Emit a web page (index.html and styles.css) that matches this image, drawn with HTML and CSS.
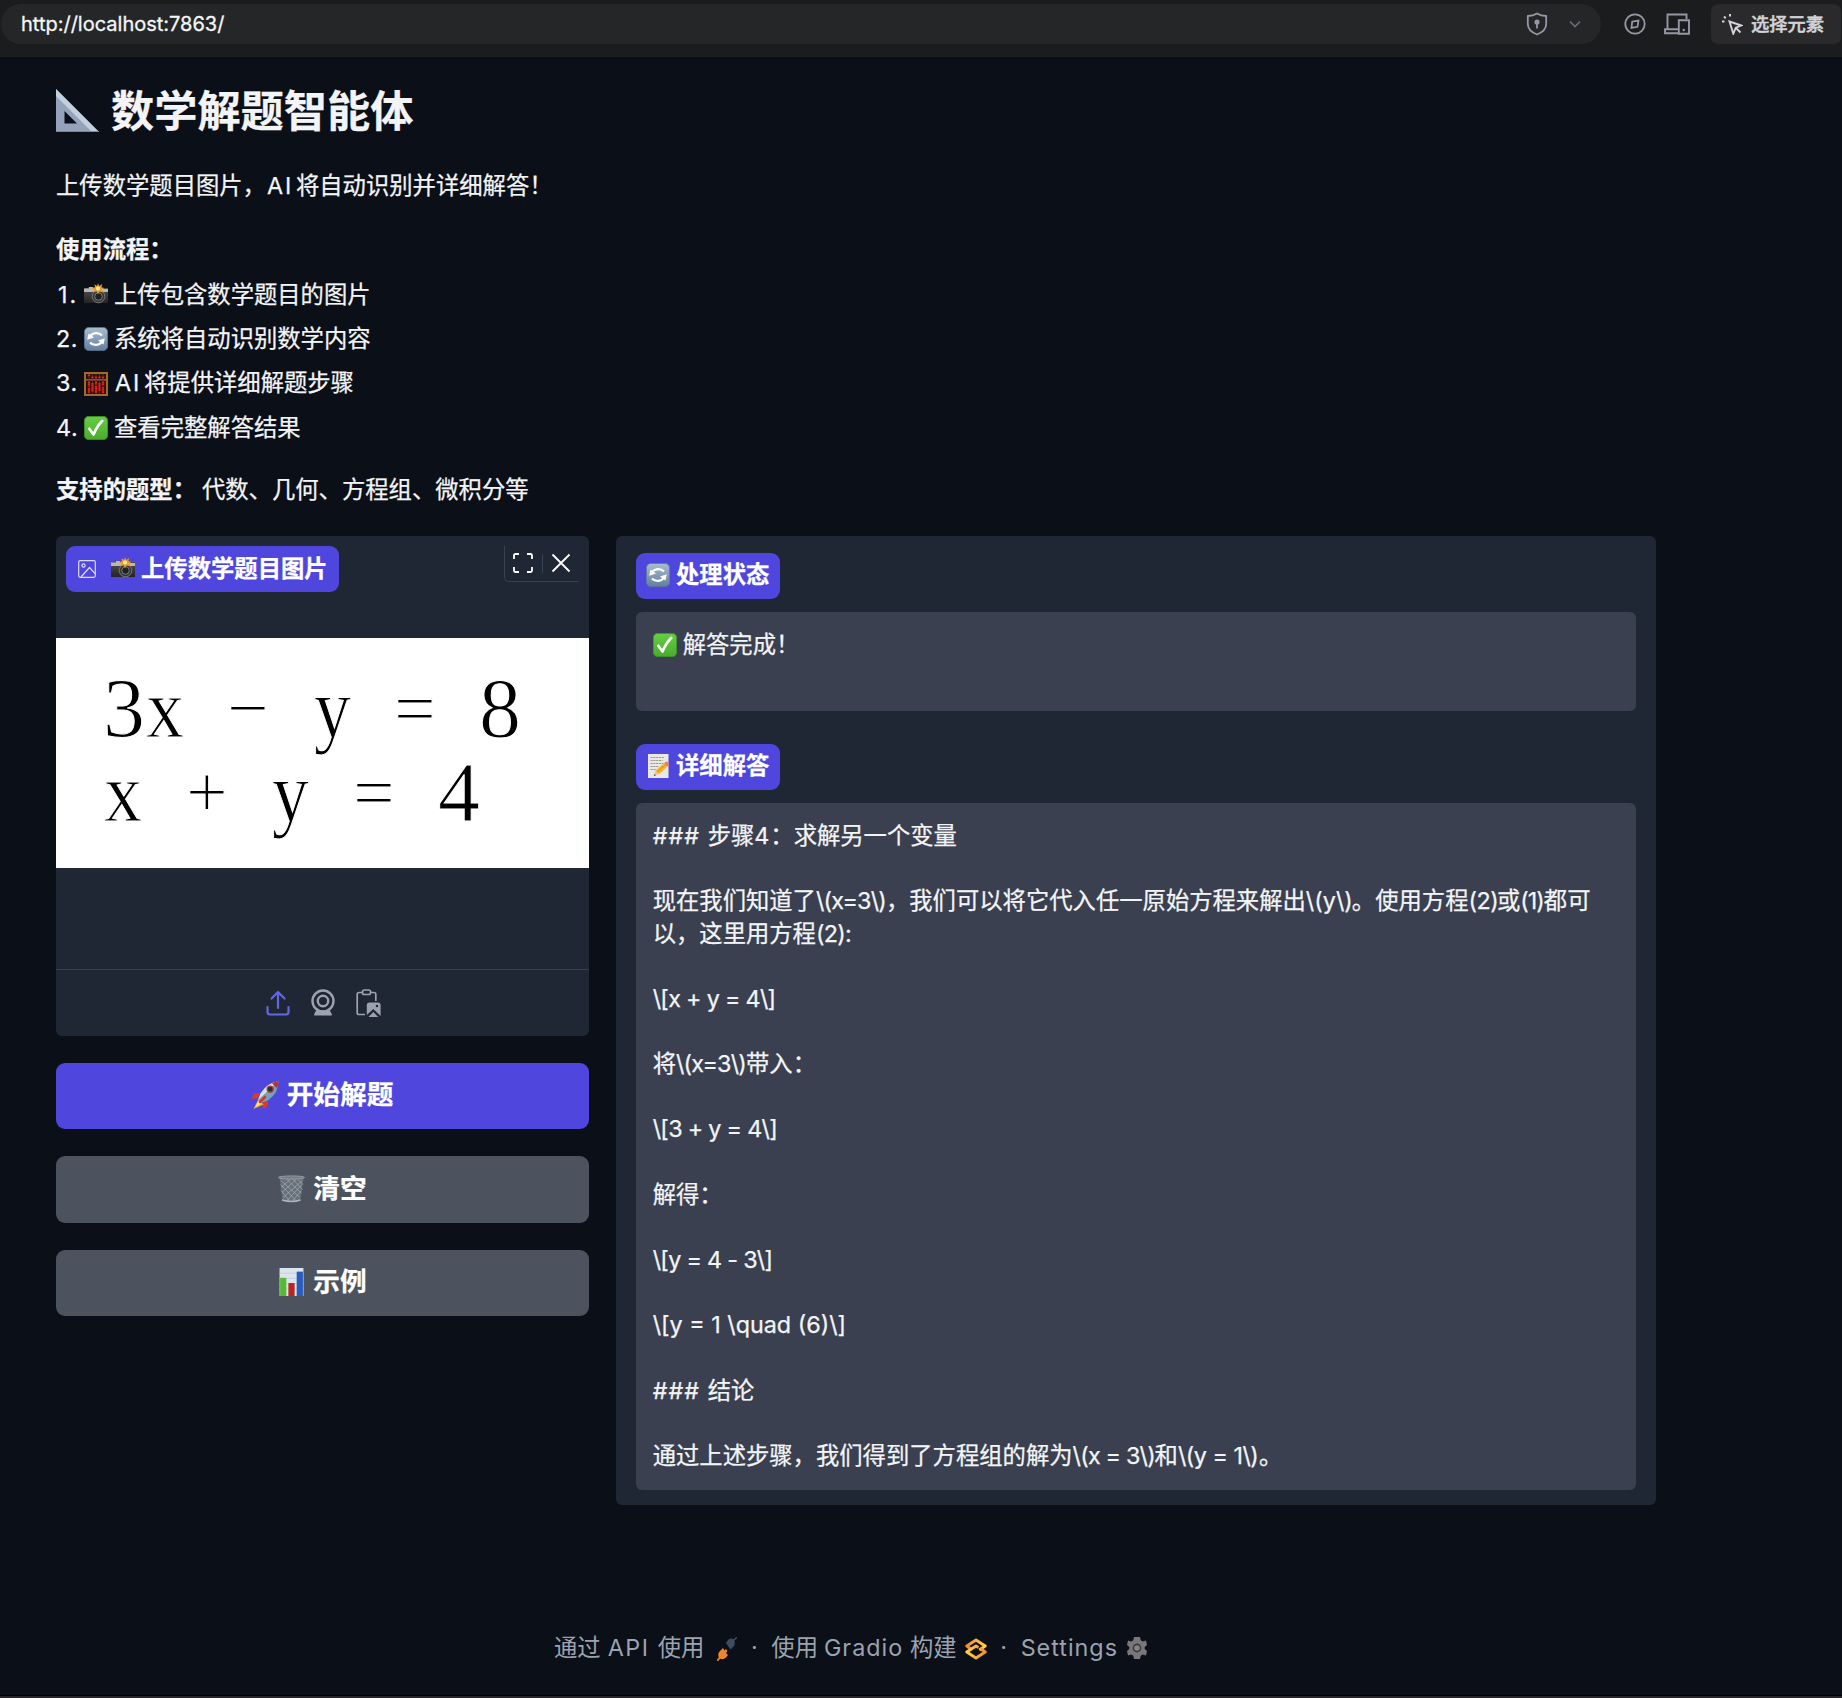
FILE: index.html
```html
<!DOCTYPE html>
<html lang="zh-CN">
<head>
<meta charset="utf-8">
<title>数学解题智能体</title>
<link rel="stylesheet" href="styles.css">
</head>
<body>
<svg class="sprite" aria-hidden="true">
  <defs>
    <linearGradient id="g-blue" x1="0" y1="0" x2="0" y2="1"><stop offset="0" stop-color="#a9bdd0"/><stop offset="1" stop-color="#627f9f"/></linearGradient>
    <linearGradient id="g-green" x1="0" y1="0" x2="0" y2="1"><stop offset="0" stop-color="#65cf43"/><stop offset="1" stop-color="#4aab2c"/></linearGradient>
    <linearGradient id="g-body" x1="0" y1="0" x2="0" y2="1"><stop offset="0" stop-color="#55534f"/><stop offset="1" stop-color="#242424"/></linearGradient>
    <linearGradient id="g-logo" x1="0" y1="0" x2="1" y2="0"><stop offset="0" stop-color="#f58b32"/><stop offset="1" stop-color="#ffd044"/></linearGradient>
    <linearGradient id="g-logo2" x1="0" y1="0" x2="1" y2="0"><stop offset="0" stop-color="#ffd044"/><stop offset="1" stop-color="#f58b32"/></linearGradient>
  </defs>
  <symbol id="camera" viewBox="0 0 24 24">
    <path d="M0 7q0-2 2-2h2l1-1h4l1 1h14v15H0z" fill="url(#g-body)"/>
    <path d="M0 5.500h5V4h4v2h15v3H0z" fill="#b9b7b2"/>
    <circle cx="14.500" cy="13.500" r="6.300" fill="#353535" stroke="#777" stroke-width="1"/>
    <circle cx="14.500" cy="13.500" r="3.800" fill="#1c2228" stroke="#919191" stroke-width=".8"/>
    <path d="M14 0l1.200 3 3-2-.8 3.300 3 .8-2.800 1.700L19 9.500l-3.200-1L14 11l-1.700-2.700L9 9l1.500-2.600L8 5l3-.8-.5-3 2.700 1.800z" fill="#ed9a27"/>
    <circle cx="14" cy="5.600" r="2" fill="#fff4a4"/>
  </symbol>
  <symbol id="refresh" viewBox="0 0 24 24">
    <rect x=".4" y=".4" width="23.200" height="23.200" rx="4.500" fill="url(#g-blue)" stroke="#5d7894" stroke-width=".8"/>
    <path d="M6 9.500a7 6 0 0 1 12-1M18 14.500a7 6 0 0 1-12 1" fill="none" stroke="#fff" stroke-width="2.200"/>
    <path d="M3.200 12.700L4.500 6.500l5.500 4zM20.800 11.300l-1.300 6.200-5.500-4z" fill="#fff"/>
  </symbol>
  <symbol id="abacus" viewBox="0 0 24 24">
    <rect x="1" y="1" width="22" height="22" fill="#260f0c" stroke="#a0682b" stroke-width="2"/>
    <path d="M2 7.800h20" stroke="#a0682b" stroke-width="1.400"/>
    <path d="M5 2v20M8.500 2v20M12 2v20M15.500 2v20M19 2v20" stroke="#6a3427" stroke-width=".8"/>
    <path d="M5 2.500v2M8.500 4.500v2M12 4.500v2M15.500 4.500v2M19 4.500v2M5 9.500v5M5 16v5M8.500 11v9M12 9.500v3M12 14v7M15.500 11v8M19 9.500v4M19 15v6" stroke="#e3221c" stroke-width="2.400" stroke-dasharray="1.700 .4"/>
  </symbol>
  <symbol id="check" viewBox="0 0 24 24">
    <rect x=".4" y=".4" width="23.200" height="23.200" rx="4.200" fill="url(#g-green)" stroke="#3f9a28" stroke-width=".8"/>
    <path d="M5.300 12.800l4.200 5.700q4-9.300 8.700-13.500" fill="none" stroke="#fff" stroke-width="2.700" stroke-linecap="round" stroke-linejoin="round"/>
  </symbol>
  <symbol id="memo" viewBox="0 0 24 24">
    <path d="M2 0h20.500v24H2z" fill="#e9e8e4"/>
    <path d="M4.500 3.500h14M4.500 6.500h12M4.500 9.500h13M4.500 12.500h8M4.500 15.500h5" stroke="#999" stroke-width="1" stroke-dasharray="2.200 .6"/>
    <path d="M8 21.800l1.500-5.300 3.500 3.800z" fill="#e8c79b"/><path d="M8 22l.6-2 1.300 1.300z" fill="#333"/>
    <path d="M9.500 16.500L18 9.200l3.300 3.600-8.300 7.500z" fill="#f2b72c"/><path d="M11 18.200l8.500-7.500" stroke="#c98517" stroke-width=".9"/>
    <path d="M18 9.200l1.800-1.500q1-.7 2 .3l1 1.100q.8 1-.2 2l-1.300 1.700z" fill="#e77b7b"/>
  </symbol>
  <symbol id="rocket" viewBox="0 0 27 28">
    <path d="M8 12L2 12.500Q0 16 0 18l6-1zM16 19l-.5 6q-3 2.500-5 2.500l.5-6z" fill="#dd3b22"/>
    <path d="M6.500 18L1.500 28 11.500 23.500z" fill="#f8b228"/><path d="M6.500 20L3.500 26 9.500 22.500z" fill="#fff07a"/>
    <path d="M26.500.3Q16 1.500 8.800 12L6 19l3 3 7.500-3Q26.500 12 26.500.3z" fill="#76a3b9"/>
    <path d="M26.500.3Q16 1.500 8.800 12L6 19 21 5z" fill="#d4e4e9"/>
    <path d="M26.500.3Q23 .5 20 2.200l5 5.200Q26.500 4 26.500.3z" fill="#be3429"/>
    <circle cx="18.200" cy="8.200" r="3" fill="#26313c" stroke="#b33d31" stroke-width="1.300"/>
    <path d="M8 21l5-5" stroke="#d63726" stroke-width="2.600" stroke-linecap="round"/>
  </symbol>
  <symbol id="trash" viewBox="0 0 27 27">
    <path d="M1.500 2.200h24L22.300 25q-9 3-17.600 0z" fill="#66707b"/>
    <path d="M3 5l19 17M2.800 9l15 16M9 4l14.500 14M15 4l9.500 10M20 4l5 5M24.500 5L5 22M24 9L9 25M18 4L4 17M12 4L3 12M23.500 15L14 26M3 15l9 11" stroke="#a5acb3" stroke-width=".7"/>
    <path d="M4 24.500q9.500 3 18.500 0" fill="none" stroke="#aeb4b9" stroke-width="1.500"/>
    <ellipse cx="13.500" cy="2" rx="13" ry="1.600" fill="#737a82" stroke="#a4a8ac" stroke-width=".8"/>
  </symbol>
  <symbol id="chart" viewBox="0 0 24 27">
    <path d="M.5 0h23v27H.5z" fill="#dce4ec"/><path d="M.5 5h23M.5 10h23M.5 15h23M.5 20h23" stroke="#c4ced9" stroke-width=".8"/>
    <path d="M1 9.500h6V27H1z" fill="#55bb35"/><path d="M9 14.500h6V27H9z" fill="#b92522"/><path d="M17 3.500h6V27h-6z" fill="#275bbd"/>
  </symbol>
</svg>

<header class="browser">
  <div class="address">
    <span class="url">http://localhost:7863/</span>
    <svg class="shield" viewBox="0 0 22 24"><path d="M11 1.500Q15 4 20.200 4v8q0 6.800-9.200 10.500Q1.800 18.800 1.800 12V4Q7 4 11 1.500z" fill="none" stroke="currentColor" stroke-width="1.800" stroke-linejoin="round"/><circle cx="11" cy="10" r="2.600" fill="currentColor"/><path d="M11 10v6.500" stroke="currentColor" stroke-width="1.800"/></svg>
    <svg class="chevron" viewBox="0 0 12 8"><path d="M1 1.500l5 5 5-5" fill="none" stroke="currentColor" stroke-width="1.700"/></svg>
  </div>
  <svg class="compass" viewBox="0 0 22 22"><circle cx="11" cy="11" r="9.700" fill="none" stroke="currentColor" stroke-width="1.800"/><path d="M8.200 8.700L14.500 7.500l-1 6.300-6 1.100z" fill="none" stroke="currentColor" stroke-width="1.800"/></svg>
  <svg class="devices" viewBox="0 0 26 22"><path d="M3.500 15.500V1.500h19V6M14 20.200H1v-4h13M14.800 7.200H25v13.500H14.800z" fill="none" stroke="currentColor" stroke-width="1.900"/><circle cx="19.700" cy="17" r="1.200" fill="currentColor"/></svg>
  <div class="picker">
    <svg viewBox="0 0 21 21"><path d="M7.500 7.500l11.800 4-5.500 2.200-2.500 6zM14 14l4.500 4.500" fill="none" stroke="currentColor" stroke-width="1.900"/><path d="M0 7.500h2.500M2 2.500l1.700 1.700M8 0v2.500" stroke="currentColor" stroke-width="2"/></svg>
    <span>选择元素</span>
  </div>
</header>

<main class="page">
  <section class="intro">
    <h1><svg viewBox="0 0 43 43"><path fill-rule="evenodd" d="M0 0l43 43H0zM8.500 22v12.500H21z" fill="#94a3b9"/><path d="M0 0l43 43h-7L0 7z" fill="#c2d0e2"/><path d="M0 42.500h42" stroke="#788aa0"/></svg>数学解题智能体</h1>
    <p class="lead">上传数学题目图片，<i class="w ai">AI</i>将自动识别并详细解答！</p>
    <p class="heading"><b>使用流程：</b></p>
    <ol>
      <li><span class="num one">1.</span><svg class="emoji"><use href="#camera"/></svg>上传包含数学题目的图片</li>
      <li><span class="num">2.</span><svg class="emoji"><use href="#refresh"/></svg>系统将自动识别数学内容</li>
      <li><span class="num">3.</span><svg class="emoji"><use href="#abacus"/></svg><i class="w ai">AI</i>将提供详细解题步骤</li>
      <li><span class="num">4.</span><svg class="emoji"><use href="#check"/></svg>查看完整解答结果</li>
    </ol>
    <p class="types"><b>支持的题型：</b>代数、几何、方程组、微积分等</p>
  </section>

  <div class="columns">
    <div class="left">
      <div class="image-card">
        <div class="image-top">
          <div class="label label-image">
            <svg class="pic" viewBox="0 0 18 18"><rect x=".7" y=".7" width="16.600" height="16.600" rx="1.500"/><circle cx="5.500" cy="5.500" r="1.600"/><path d="M3 17l8.500-9.500 5.800 6.300"/></svg>
            <svg class="emoji"><use href="#camera"/></svg><span>上传数学题目图片</span>
          </div>
          <div class="tools">
            <svg viewBox="0 0 20 20"><path d="M1 6V2.500Q1 1 2.500 1H6M14 1h3.500Q19 1 19 2.500V6M19 14v3.500q0 1.500-1.500 1.500H14M6 19H2.500Q1 19 1 17.500V14"/></svg>
            <span class="bar"></span>
            <svg viewBox="0 0 20 20"><path d="M1.500 1.500l17 17M18.500 1.500l-17 17"/></svg>
          </div>
        </div>
        <svg class="photo" viewBox="0 0 533 230">
          <g class="glyphs">
            <text x="47" y="99">3</text><text x="90" y="99" textLength="38" lengthAdjust="spacingAndGlyphs">x</text><text x="258" y="99" textLength="37" lengthAdjust="spacingAndGlyphs">y</text><text x="423" y="99">8</text>
            <text x="48" y="183" textLength="38" lengthAdjust="spacingAndGlyphs">x</text><text x="216" y="183" textLength="37" lengthAdjust="spacingAndGlyphs">y</text><text x="382" y="183">4</text>
          </g>
          <g class="operators">
            <text x="171" y="94.500">−</text><text x="338" y="94.500">=</text><text x="130" y="179">+</text><text x="297" y="179">=</text>
          </g>
        </svg>
        <div class="sources">
          <svg class="upload" viewBox="0 0 24 26"><path d="M12 18V2M5.500 8.500L12 2l6.500 6.500M1.500 17v5q0 2.500 2.500 2.500h16q2.500 0 2.500-2.500v-5" fill="none" stroke="currentColor" stroke-width="2.200" stroke-linecap="round" stroke-linejoin="round"/></svg>
          <svg class="webcam" viewBox="0 0 24 27"><circle cx="12" cy="12" r="10.500" fill="none" stroke="currentColor" stroke-width="2.400"/><circle cx="12" cy="12" r="5.200" fill="none" stroke="currentColor" stroke-width="2.400"/><path d="M5 21.500h14l2 4.200q0 .9-1 .9H4q-1 0-1-.9z" fill="currentColor"/></svg>
          <svg class="paste" viewBox="0 0 25 28"><path d="M6.500 3.500H3q-1.800 0-1.800 1.800v18.400q0 1.800 1.800 1.800h6M14.500 3.500H18q1.800 0 1.800 1.800V12M6.500 2.800q0-1.800 1.800-1.800h4.400q1.800 0 1.800 1.800v.9q0 1.800-1.800 1.800H8.300q-1.800 0-1.800-1.800z" fill="none" stroke="currentColor" stroke-width="1.700"/><path d="M13.500 13.500H22q2.600 0 2.600 2.600V27l-7.300-7-6.500 6V16q0-2.500 2.700-2.500zM12.500 28l4.800-5 5 5z" fill="currentColor"/><circle cx="21" cy="17" r="1.200" fill="#202734"/></svg>
        </div>
      </div>
      <button class="primary"><svg class="rocket"><use href="#rocket"/></svg>开始解题</button>
      <button><svg class="rocket"><use href="#trash"/></svg>清空</button>
      <button><svg class="rocket"><use href="#chart"/></svg>示例</button>
    </div>

    <div class="right">
      <div class="label"><svg class="emoji"><use href="#refresh"/></svg>处理状态</div>
      <div class="box status"><svg class="emoji"><use href="#check"/></svg>解答完成！</div>
      <div class="label second"><svg class="emoji"><use href="#memo"/></svg>详细解答</div>
      <div class="box answer">
        <p><i class="w hashes">###</i>步骤<i class="w four">4</i>：求解另一个变量</p>
        <p>现在我们知道了<i class="w x3">\(x=3\)</i>，我们可以将它代入任一原始方程来解出<i class="w yy">\(y\)</i>。使用方程<i class="w p2">(2)</i>或<i class="w p1">(1)</i>都可<br>以，这里用方程<i class="w p2c">(2):</i></p>
        <p class="eq">\[x + y = 4\]</p>
        <p>将<i class="w x3">\(x=3\)</i>带入：</p>
        <p class="eq">\[3 + y = 4\]</p>
        <p>解得：</p>
        <p class="eq">\[y = 4 - 3\]</p>
        <p class="quad">\[y = 1 \quad (6)\]</p>
        <p><i class="w hashes">###</i>结论</p>
        <p>通过上述步骤，我们得到了方程组的解为<i class="w xe">\(x = 3\)</i>和<i class="w ye">\(y = 1\)</i>。</p>
      </div>
    </div>
  </div>
</main>

<footer>
  <span>通过</span><span class="api">API</span><span>使用</span>
  <svg class="plug" viewBox="0 0 20 24"><path d="M0 24l3-3.500" stroke="#f0842e" stroke-width="1.800"/><path d="M2 21q-2-4 1-7l3-3 1.500 2.500 1.500-1.500 1.500 2-1.500 2 2 2-2 2.500q-3.500 3-7 .5z" fill="#f0842e"/><path d="M9 6l2-3q3-2.500 6-.5 2 4-.5 7l-3 3z" fill="#404a61"/><path d="M17 3l3-3" stroke="#404a61" stroke-width="1.600"/></svg>
  <span class="dot">·</span>
  <span>使用</span><span class="gradio">Gradio</span><span>构建</span>
  <svg class="logo" viewBox="0 0 22 22"><path d="M6.500 11.500L1.800 8 11 2l9.200 6-6 4" fill="none" stroke="url(#g-logo)" stroke-width="3" stroke-linejoin="round"/><path d="M15.500 10.500l4.700 3.500L11 20l-9.200-6 9.200-6 2.500 1.500" fill="none" stroke="url(#g-logo2)" stroke-width="3" stroke-linejoin="round"/></svg>
  <span class="dot">·</span>
  <span class="settings">Settings</span>
  <svg class="gear" viewBox="0 0 20 22"><path d="M7 0h6l.7 3.300 2 1.200L19 3.500 20 8l-2.300 2v2l2.300 2-1 4.500-3.300-1-2 1.200L13 22H7l-.7-3.300-2-1.200-3.300 1L0 14l2.300-2v-2L0 8l1-4.500 3.300 1 2-1.200z" fill="#78787a"/><circle cx="10" cy="11" r="3.600" fill="#858587" stroke="#3a3a3d" stroke-width="1.600"/></svg>
</footer>
<div class="edge"></div>
</body>
</html>
```
FILE: styles.css
```css
* { box-sizing: border-box; }
body {
  margin: 0;
  width: 1842px;
  height: 1698px;
  display: flex;
  flex-direction: column;
  overflow: hidden;
  background: #0b0f18;
  color: #f3f4f6;
  font: 23.33px/1.4 Inter, "Noto Sans CJK SC", sans-serif;
}
svg { display: block; flex: none; }
.sprite { position: absolute; width: 0; height: 0; }
h1, p, ol { margin: 0; padding: 0; }
i { font-style: normal; }

.browser {
  height: 57px;
  padding: 4px 0 13px 1px;
  display: flex;
  align-items: center;
  background: #1b1c1d;
  color: #9796a7;
}
.address {
  width: 1600px;
  height: 40px;
  padding: 0 20px;
  display: flex;
  align-items: center;
  border-radius: 20px;
  background: #252627;
}
.url { flex: 1; color: #f5f5f6; font-size: 20px; line-height: 40px; letter-spacing: 0; -webkit-text-stroke: .3px; }
.shield { width: 22px; height: 24px; margin-right: 21px; }
.chevron { width: 12px; height: 8px; color: #686c75; }
.compass { width: 22px; height: 22px; margin-left: 23px; }
.devices { width: 26px; height: 22px; margin-left: 18px; }
.picker {
  width: 130px;
  height: 40px;
  margin-left: 21px;
  padding-left: 11px;
  display: flex;
  align-items: center;
  border-radius: 7px;
  background: #2a2a2d;
  color: #d2d2d7;
  font-size: 18.300px;
  font-weight: 500;
}
.picker svg { width: 21px; height: 21px; margin-right: 8px; }
.picker span { padding-top: 1px; -webkit-text-stroke: .5px; }

.page { flex: 1; padding: 0 56px; -webkit-text-stroke: .25px; }
.w, .num { display: inline-block; white-space: pre; }
.ai { width: 30px; padding-left: 1px; letter-spacing: 2px; }
.emoji { width: 24px; height: 24px; margin-right: 6px; }

h1 {
  padding-top: 27px;
  display: flex;
  align-items: center;
  font-size: 43.200px;
  line-height: 54px;
}
h1 svg { width: 43px; height: 43px; margin: -2px 12px 0 0; }
.lead { margin-top: 32.400px; }
.heading { margin-top: 31px; }
ol { margin-top: 6px; list-style: none; }
li { height: 44.400px; display: flex; align-items: center; }
.num { width: 28px; letter-spacing: .6px; }
.one { padding-left: 2px; letter-spacing: 2px; }
.types { margin-top: 23.500px; }
.types b { margin-right: 6px; }

.columns { margin-top: 29.500px; display: flex; gap: 27px; align-items: flex-start; }
.left { width: 533px; display: flex; flex-direction: column; gap: 27px; }
.image-card {
  height: 500px;
  display: flex;
  flex-direction: column;
  border-radius: 6px;
  background: #202734;
  overflow: hidden;
}
.image-top { height: 102px; padding: 10px; display: flex; justify-content: space-between; align-items: flex-start; }
.label {
  width: 144px;
  height: 46px;
  padding: 0 0 2px 10px;
  display: flex;
  align-items: center;
  border-radius: 9px;
  background: #4f46dd;
  color: #fff;
  font-weight: 700;
}
.label .emoji { margin-right: 6px; }
.label-image { width: 273px; padding: 0 0 0 12px; white-space: nowrap; }
.pic { width: 18px; height: 18px; margin-right: 15px; fill: none; stroke: #dddcff; stroke-width: 1.200; }
.tools {
  width: 75px;
  height: 36px;
  padding: 0 8px;
  display: flex;
  align-items: center;
  justify-content: space-between;
  border-left: 1px solid #374151;
  border-bottom: 1px solid #374151;
  border-bottom-left-radius: 5px;
}
.tools svg { width: 20px; height: 20px; fill: none; stroke: #fff; stroke-width: 1.800; }
.bar { width: 1px; height: 19px; background: #374151; }
.photo { width: 533px; height: 230px; background: #fff; }
.glyphs { font: 84px "Liberation Serif", serif; fill: #000; stroke: #fff; stroke-width: 1px; }
.operators { font: 74px "Liberation Serif", serif; fill: #000; stroke: #fff; stroke-width: 1.200px; }
.sources {
  height: 67px;
  margin-top: auto;
  padding-left: 1px;
  display: flex;
  justify-content: center;
  align-items: center;
  gap: 21px;
  border-top: 1px solid #374151;
  color: #9ca3af;
}
.upload { width: 24px; height: 26px; color: #6366e5; }
.webcam { width: 24px; height: 27px; }
.paste { width: 25px; height: 28px; }
button {
  height: 66.400px;
  padding: 0 0 2px;
  display: flex;
  align-items: center;
  justify-content: center;
  border: 0;
  border-radius: 9px;
  background: #4c535f;
  color: #fff;
  font: 700 26.670px/1.4 Inter, "Noto Sans CJK SC", sans-serif;
}
.primary { background: #4f46dd; }
.rocket { width: 27px; height: 28px; margin-right: 8px; }

.right { width: 1040px; height: 969px; padding: 17px 20px; border-radius: 6px; background: #202734; }
.box { margin-top: 13px; padding: 16.670px; border-radius: 6px; background: #3a404f; }
.status { height: 99px; display: flex; align-items: flex-start; }
.status .emoji { margin-top: 4px; }
.second { margin-top: 33px; }
.answer { height: 687px; display: flex; flex-direction: column; gap: 32.660px; white-space: nowrap; }
.hashes { width: 55px; letter-spacing: 1px; }
.four { width: 16px; }
.x3 { width: 70px; letter-spacing: -.8px; }
.yy { width: 46px; }
.p2 { width: 28.500px; letter-spacing: -.5px; }
.p2c { letter-spacing: -.7px; }
.p1 { width: 23.500px; letter-spacing: -1px; }
.eq { letter-spacing: -.7px; }
.xe { width: 82px; letter-spacing: -.8px; }
.ye { width: 81px; letter-spacing: -.5px; }

footer {
  height: 94px;
  padding: 31px 0 0 554px;
  display: flex;
  align-items: flex-start;
  color: #9ca3af;
}
.api { width: 57px; padding-left: 7px; letter-spacing: 1.500px; }
.gradio { width: 92px; padding-left: 6px; letter-spacing: 1px; }
.plug { width: 20px; height: 24px; margin: 5px 0 0 13px; }
.dot { width: 34px; text-align: center; }
.logo { width: 22px; height: 22px; margin: 6px 0 0 8px; }
.settings { width: 98px; letter-spacing: 1px; }
.gear { width: 20px; height: 22px; margin: 5px 0 0 8px; }
.edge { height: 3px; border-top: 1px solid #000; background: #27242a; }
```
